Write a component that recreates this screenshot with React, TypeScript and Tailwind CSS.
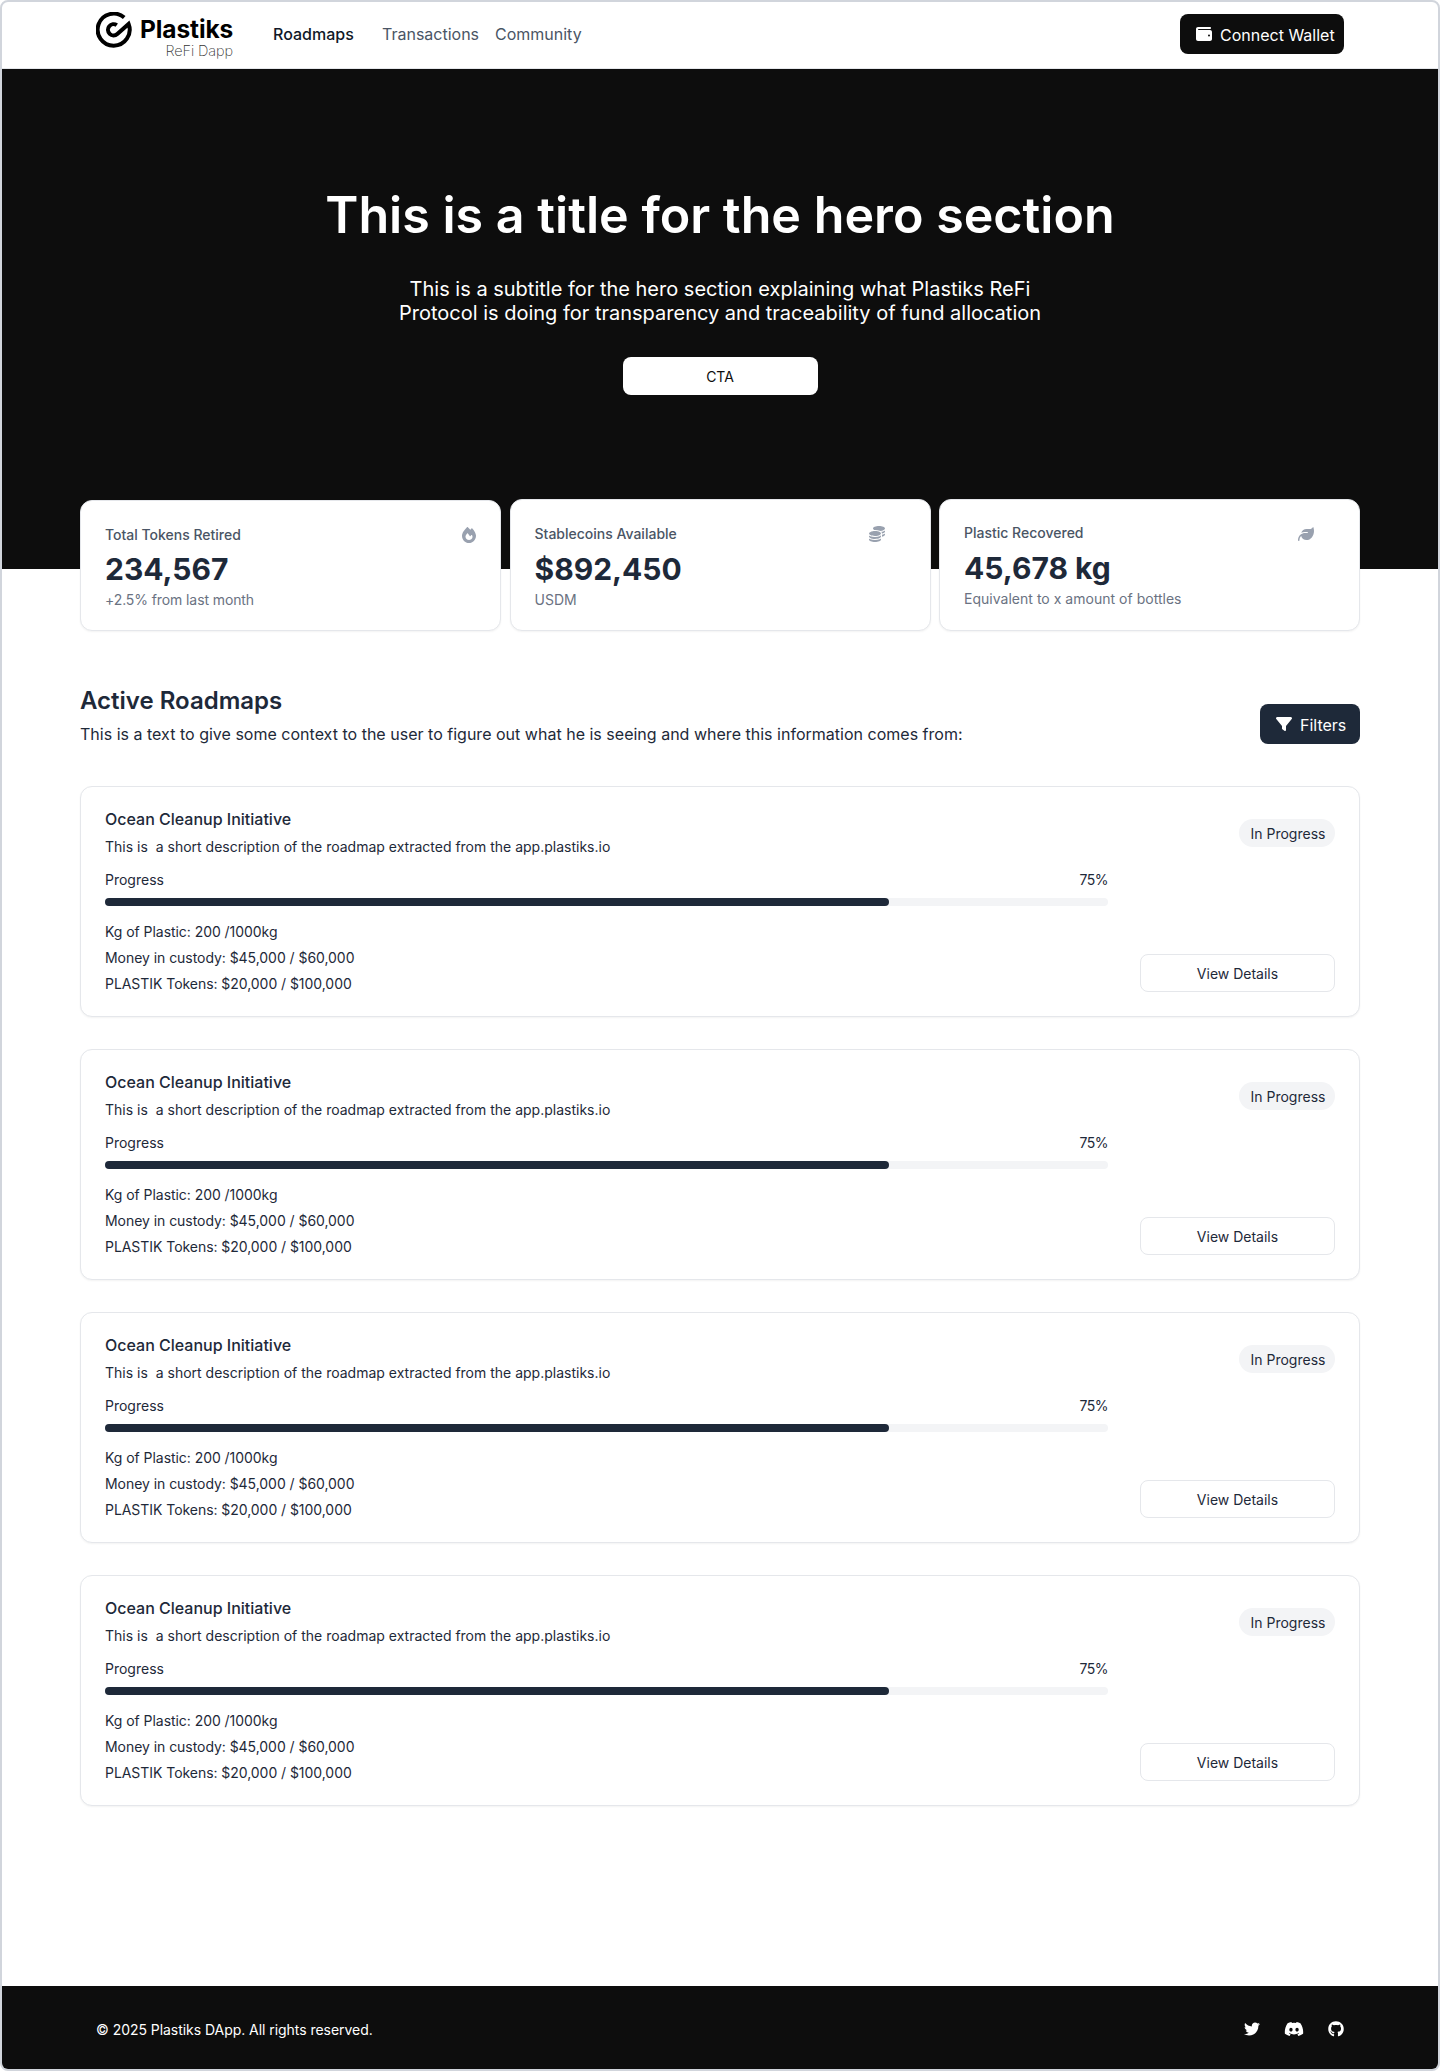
import type { ReactNode } from "react";
import { FaWallet, FaFilter, FaTwitter, FaDiscord, FaGithub, FaCoins, FaLeaf, FaFire } from "react-icons/fa6";

function Logo() {
  return (
    <div className="flex h-[50px] w-[138px] items-start">
      <svg className="h-9 w-9 shrink-0" viewBox="0 0 36 36" fill="none" stroke="#000" strokeWidth="4">
        <path d="M28.2 5.6A16 16 0 1 0 32.6 11.9L21.3 22A5.6 5.6 0 1 1 20.8 13.2" strokeLinejoin="miter" />
      </svg>
      <div className="ml-2 flex w-[94px] flex-col pt-[2px]">
        <span className="h-[28px] whitespace-nowrap text-[24.5px] leading-[30px] font-bold tracking-[-0.1px] text-black">
          Plastiks
        </span>
        <span className="h-[18px] self-end whitespace-nowrap pr-[1px] text-[14.5px] leading-[18px] font-extralight tracking-[-0.1px] text-[#333]">
          ReFi Dapp
        </span>
      </div>
    </div>
  );
}

function StatCard({
  label,
  value,
  note,
  icon,
  className,
  valueClass,
  noteClass,
  iconClass,
}: {
  label: string;
  value: string;
  note: string;
  icon: ReactNode;
  className: string;
  valueClass: string;
  noteClass: string;
  iconClass: string;
}) {
  return (
    <div className={`flex w-[421px] justify-between rounded-xl border border-gray-200 bg-white pl-6 shadow-xs ${className}`}>
      <div>
        <p className="text-sm leading-5 font-medium text-gray-600">{label}</p>
        <p className={`text-[30px] leading-9 font-bold text-gray-800 ${valueClass}`}>{value}</p>
        <p className={`mt-[3px] text-sm leading-5 text-gray-500 ${noteClass}`}>{note}</p>
      </div>
      <div className={`flex h-5 items-center text-gray-400 ${iconClass}`}>{icon}</div>
    </div>
  );
}

function RoadmapCard() {
  return (
    <div className="flex h-[231px] justify-between rounded-xl border border-gray-200 bg-white px-6 pt-5 text-sm text-gray-800 shadow-xs">
      <div className="w-[1003px]">
        <h3 className="text-base leading-6 font-medium">Ocean Cleanup Initiative</h3>
        <p className="mt-[6px] leading-5 whitespace-pre">{"This is  a short description of the roadmap extracted from the app.plastiks.io"}</p>
        <div className="mt-[13px] flex justify-between leading-5">
          <span>Progress</span>
          <span className="tracking-[-0.5px]">75%</span>
        </div>
        <div className="mt-2 h-2 rounded-full bg-gray-100">
          <div className="h-2 w-[784px] rounded-full bg-gray-800" />
        </div>
        <div className="mt-[13px] leading-[26px] tracking-[-0.05px]">
          <p>Kg of Plastic: 200 /1000kg</p>
          <p>Money in custody: $45,000 / $60,000</p>
          <p>PLASTIK Tokens: $20,000 / $100,000</p>
        </div>
      </div>
      <div className="flex flex-col items-end pt-3">
        <span className="flex h-7 w-24 items-center justify-center rounded-full bg-gray-100 pt-px pl-[2px]">In Progress</span>
        <button className="mt-[107px] flex h-[38px] w-[195px] items-center justify-center rounded-lg border border-gray-200 pt-[2px]">
          View Details
        </button>
      </div>
    </div>
  );
}

export default function App() {
  return (
    <div className="h-[2071px] w-[1440px] bg-white font-['Inter',sans-serif]">
      <div className="flex h-full flex-col overflow-hidden rounded-lg border-2 border-gray-300 bg-white">
        <header className="flex h-[67px] shrink-0 items-start justify-between border-b border-gray-200 pr-[94px] pl-[94px]">
          <div className="flex items-start pt-[10px]">
            <Logo />
            <nav className="ml-[39px] flex pt-[10px] text-base leading-6 text-gray-600">
              <a className="w-[109px] font-medium text-gray-900">Roadmaps</a>
              <a className="w-[113px]">Transactions</a>
              <a>Community</a>
            </nav>
          </div>
          <button className="mt-3 flex h-10 w-[164px] items-center rounded-lg bg-[#0d0d0d] pl-4 text-base text-white">
            <FaWallet className="mb-px h-4 w-4" />
            <span className="ml-2 pt-[2px] whitespace-nowrap">Connect Wallet</span>
          </button>
        </header>

        <section className="flex h-[500px] shrink-0 flex-col items-center bg-[#0d0d0d] pt-[116px] text-white">
          <h1 className="text-[50.2px] leading-[60px] font-semibold">This is a title for the hero section</h1>
          <p className="mt-8 text-center text-xl leading-6">
            This is a subtitle for the hero section explaining what Plastiks ReFi
            <br />
            Protocol is doing for transparency and traceability of fund allocation
          </p>
          <button className="mt-8 flex h-[38px] w-[195px] items-center justify-center rounded-lg bg-white pt-[2px] text-sm text-[#0d0d0d]">
            CTA
          </button>
        </section>

        <main className="flex-1 px-[78px]">
          <div className="-mt-[70px] flex items-start justify-between">
            <StatCard
              label="Total Tokens Retired"
              value="234,567"
              note="+2.5% from last month"
              className="mt-px h-[131px] pt-6"
              valueClass="mt-[6px]"
              noteClass="tracking-[-0.1px]"
              iconClass="pr-[23px]"
              icon={<FaFire className="h-4 w-4" />}
            />
            <StatCard
              label="Stablecoins Available"
              value="$892,450"
              note="USDM"
              className="h-[132px] pt-6"
              valueClass="mt-[7px]"
              noteClass=""
              iconClass="pr-[45px]"
              icon={<FaCoins className="h-4 w-4" />}
            />
            <StatCard
              label="Plastic Recovered"
              value="45,678 kg"
              note="Equivalent to x amount of bottles"
              className="h-[132px] pt-[23px]"
              valueClass="mt-[7px]"
              noteClass="tracking-[0.02px]"
              iconClass="pr-[45px] pt-px"
              icon={<FaLeaf className="h-4 w-4" />}
            />
          </div>

          <div className="mt-[54px] flex justify-between text-gray-800">
            <div>
              <h2 className="text-2xl leading-8 font-semibold">Active Roadmaps</h2>
              <p className="mt-[5px] text-base leading-6 tracking-[0.012px]">
                This is a text to give some context to the user to figure out what he is seeing and where this information comes from:
              </p>
            </div>
            <button className="mt-[19px] flex h-10 w-[100px] items-center rounded-lg bg-gray-800 pl-4 text-base text-white">
              <FaFilter className="mb-px h-4 w-4" />
              <span className="ml-2 pt-px">Filters</span>
            </button>
          </div>

          <div className="mt-10 flex flex-col gap-8">
            <RoadmapCard />
            <RoadmapCard />
            <RoadmapCard />
            <RoadmapCard />
          </div>
        </main>

        <footer className="flex h-[83px] shrink-0 items-center justify-between bg-[#0d0d0d] px-[94px] text-white">
          <p className="pt-[5px] text-sm tracking-[-0.045px]">© 2025 Plastiks DApp. All rights reserved.</p>
          <div className="flex items-center pt-[3px]">
            <FaTwitter className="h-4 w-4" />
            <FaDiscord className="ml-6 h-5 w-5" />
            <FaGithub className="ml-6 h-4 w-4" />
          </div>
        </footer>
      </div>
    </div>
  );
}
